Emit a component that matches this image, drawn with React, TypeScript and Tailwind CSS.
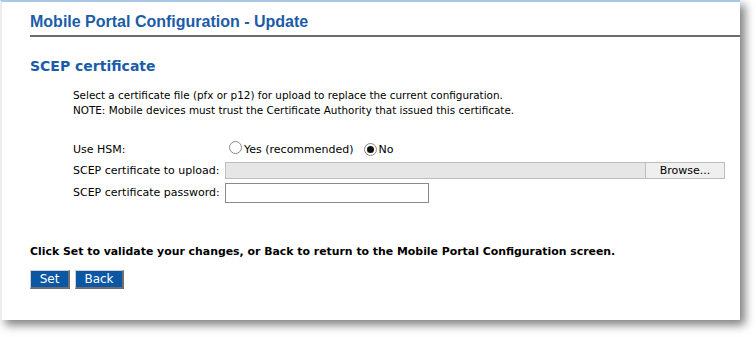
import React from "react";

const body = "font-['Tahoma','DejaVu_Sans',sans-serif] text-[11px] text-black";

function Radio({ checked }: { checked?: boolean }) {
  return (
    <span className="inline-flex h-[13px] w-[13px] items-center justify-center rounded-full border border-[#8a8a8a] bg-white">
      {checked && <span className="h-[7px] w-[7px] rounded-full bg-[#111]" />}
    </span>
  );
}

export default function App() {
  return (
    <div className="h-[337px] w-[756px] bg-white">
      <div className="h-[320px] w-[740px] border-l-2 border-t-2 border-l-[#ececec] border-t-[#a9c7e6] bg-white pl-[28px] shadow-[5px_5px_9px_rgba(0,0,0,0.5)]">
        {/* Page title */}
        <div className="mt-[10px] border-b-2 border-[#6b6b6b] pb-[4px] font-['Liberation_Sans',Arial,sans-serif] text-[16px] font-bold leading-[19px] text-[#1b5ca8]">
          Mobile Portal Configuration - Update
        </div>

        {/* Section */}
        <h2 className="mt-[21px] font-['DejaVu_Sans',Verdana,sans-serif] text-[14px] font-bold leading-[17px] text-[#1b5ca8]">
          SCEP certificate
        </h2>

        <div className="ml-[43px] mt-[13px] font-['Tahoma','DejaVu_Sans',sans-serif] text-[10.4px] leading-[15px] text-black">
          <p>Select a certificate file (pfx or p12) for upload to replace the current configuration.</p>
          <p>NOTE: Mobile devices must trust the Certificate Authority that issued this certificate.</p>
        </div>

        {/* Form */}
        <div className={`ml-[43px] mt-[23px] grid grid-cols-[152px_1fr] items-center gap-y-[4px] leading-[14px] ${body}`}>
          <span>Use HSM:</span>
          <div className="flex items-center">
            <span className="ml-[4px]"><Radio /></span>
            <span className="ml-[2px]">Yes (recommended)</span>
            <span className="ml-[10px]"><Radio checked /></span>
            <span className="ml-[2px]">No</span>
          </div>

          <span>SCEP certificate to upload:</span>
          <div className="flex h-[17px] w-[500px] border border-[#bdbdbd] bg-[#e6e6e6]">
            <div className="flex-1" />
            <button className="w-[79px] border-l border-[#bdbdbd] bg-[#efefef] text-[11px] leading-[15px]">
              Browse...
            </button>
          </div>

          <span>SCEP certificate password:</span>
          <input type="password" className="h-[20px] w-[204px] border border-[#8a8a8a] bg-white outline-none" />
        </div>

        <p className="mt-[42px] font-['Tahoma','DejaVu_Sans',sans-serif] text-[10.9px] font-bold leading-[14px] text-black">
          Click Set to validate your changes, or Back to return to the Mobile Portal Configuration screen.
        </p>

        <div className="mt-[11px] flex gap-[5px] font-['Tahoma','DejaVu_Sans',sans-serif] text-[12px] leading-[14px] text-white">
          <button className="h-[19px] w-[40px] border border-b-[#6f6f6f] border-l-[#d0d0d0] border-r-[#6f6f6f] border-t-[#d0d0d0] bg-[#0b57a4] [border-bottom-width:2px] [border-right-width:2px]">
            Set
          </button>
          <button className="h-[19px] w-[49px] border border-b-[#6f6f6f] border-l-[#d0d0d0] border-r-[#6f6f6f] border-t-[#d0d0d0] bg-[#0b57a4] [border-bottom-width:2px] [border-right-width:2px]">
            Back
          </button>
        </div>
      </div>
    </div>
  );
}
